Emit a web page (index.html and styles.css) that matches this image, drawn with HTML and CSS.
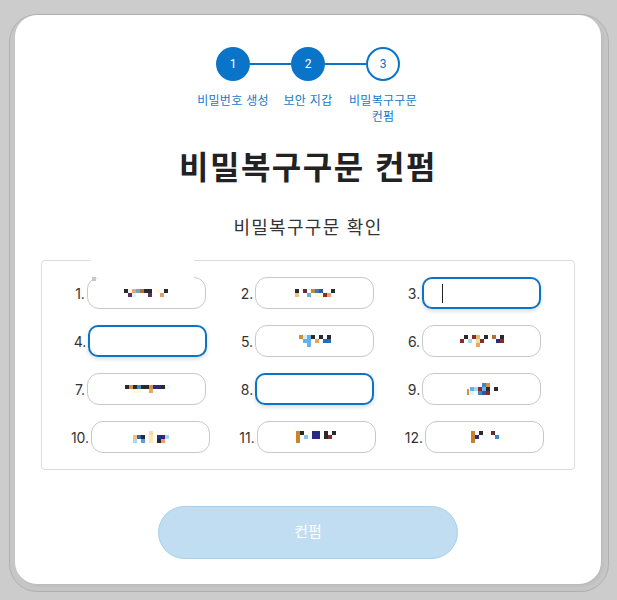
FILE: index.html
```html
<!DOCTYPE html>
<html lang="ko">
<head>
<meta charset="utf-8">
<title>비밀복구구문 컨펌</title>
<link rel="stylesheet" href="styles.css">
</head>
<body>
<div class="frame">
  <div class="card">
    <div class="stepper">
      <div class="dots">
        <span class="dot done">1</span><span class="bar"></span><span class="dot done">2</span><span class="bar"></span><span class="dot cur">3</span>
      </div>
      <div class="labels">
        <span class="label">비밀번호 생성</span>
        <span class="label">보안 지갑</span>
        <span class="label">비밀복구구문 컨펌</span>
      </div>
    </div>
    <h1 class="title">비밀복구구문 컨펌</h1>
    <p class="sub">비밀복구구문 확인</p>
    <div class="words">
      <div class="glitch"></div>
      <div class="cell"><span class="num">1.</span><div class="slot glitched"><svg width="44" height="8" viewBox="0 0 44 8" shape-rendering="crispEdges"><rect x="0" y="0" width="4" height="4" fill="#2a2a2a"/><rect x="4" y="0" width="4" height="4" fill="#fff8dc"/><rect x="8" y="0" width="4" height="4" fill="#e8a860"/><rect x="12" y="0" width="4" height="4" fill="#6aa8d8"/><rect x="16" y="0" width="4" height="4" fill="#b8702a"/><rect x="20" y="0" width="8" height="4" fill="#2a2a2a"/><rect x="32" y="0" width="4" height="4" fill="#fff8dc"/><rect x="40" y="0" width="4" height="4" fill="#2a2a2a"/><rect x="4" y="4" width="4" height="4" fill="#5c2a6a"/><rect x="8" y="4" width="4" height="4" fill="#d8f4fc"/><rect x="24" y="4" width="4" height="4" fill="#5c2a6a"/><rect x="36" y="4" width="4" height="4" fill="#e8a060"/></svg></div></div>
      <div class="cell"><span class="num">2.</span><div class="slot"><svg width="40" height="8" viewBox="0 0 40 8" shape-rendering="crispEdges"><rect x="0" y="0" width="4" height="4" fill="#2a2a2a"/><rect x="8" y="0" width="4" height="4" fill="#6a2a2a"/><rect x="16" y="0" width="4" height="4" fill="#c88a30"/><rect x="20" y="0" width="4" height="4" fill="#3a78c0"/><rect x="24" y="0" width="4" height="4" fill="#2a5aa0"/><rect x="36" y="0" width="4" height="4" fill="#2a2a2a"/><rect x="0" y="4" width="4" height="4" fill="#f0c080"/><rect x="12" y="4" width="4" height="4" fill="#6ab0e8"/><rect x="20" y="4" width="8" height="4" fill="#fff8d0"/><rect x="28" y="4" width="4" height="4" fill="#8a2a2a"/><rect x="32" y="4" width="4" height="4" fill="#e8a060"/></svg></div></div>
      <div class="cell"><span class="num">3.</span><div class="slot active"><span class="caret"></span></div></div>
      <div class="cell"><span class="num">4.</span><div class="slot active"></div></div>
      <div class="cell"><span class="num">5.</span><div class="slot"><svg width="32" height="12" viewBox="0 0 32 12" shape-rendering="crispEdges"><rect x="0" y="0" width="4" height="4" fill="#d09030"/><rect x="4" y="0" width="4" height="4" fill="#c8f0f8"/><rect x="8" y="0" width="4" height="4" fill="#6ab0e8"/><rect x="12" y="0" width="4" height="4" fill="#2a2a2a"/><rect x="20" y="0" width="4" height="4" fill="#2a2a2a"/><rect x="28" y="0" width="4" height="4" fill="#2a2a2a"/><rect x="4" y="4" width="8" height="4" fill="#6ab0e8"/><rect x="16" y="4" width="4" height="4" fill="#e8a060"/><rect x="24" y="4" width="8" height="4" fill="#2a6ab8"/><rect x="8" y="8" width="4" height="4" fill="#6ab0e8"/></svg></div></div>
      <div class="cell"><span class="num">6.</span><div class="slot"><svg width="44" height="12" viewBox="0 0 44 12" shape-rendering="crispEdges"><rect x="4" y="0" width="4" height="4" fill="#2a2a2a"/><rect x="12" y="0" width="4" height="4" fill="#8a2a2a"/><rect x="16" y="0" width="4" height="4" fill="#d8c070"/><rect x="24" y="0" width="4" height="4" fill="#2a2a2a"/><rect x="32" y="0" width="4" height="4" fill="#b07030"/><rect x="40" y="0" width="4" height="4" fill="#2a2a2a"/><rect x="0" y="4" width="4" height="4" fill="#8a2a2a"/><rect x="8" y="4" width="4" height="4" fill="#a8d8f0"/><rect x="16" y="4" width="4" height="4" fill="#f0dca0"/><rect x="20" y="4" width="4" height="4" fill="#8a2a2a"/><rect x="36" y="4" width="4" height="4" fill="#2a2a80"/><rect x="40" y="4" width="4" height="4" fill="#8a2a2a"/><rect x="16" y="8" width="4" height="4" fill="#e8a860"/></svg></div></div>
      <div class="cell"><span class="num">7.</span><div class="slot"><svg width="44" height="8" viewBox="0 0 44 8" shape-rendering="crispEdges"><rect x="0" y="0" width="4" height="4" fill="#2a2a2a"/><rect x="4" y="0" width="4" height="4" fill="#d89040"/><rect x="8" y="0" width="4" height="4" fill="#2a2a2a"/><rect x="12" y="0" width="4" height="4" fill="#3a88d0"/><rect x="16" y="0" width="8" height="4" fill="#2a2a2a"/><rect x="24" y="0" width="4" height="4" fill="#d89040"/><rect x="28" y="0" width="8" height="4" fill="#2a2a80"/><rect x="36" y="0" width="4" height="4" fill="#2a2a2a"/><rect x="40" y="0" width="4" height="4" fill="#e8f8fc"/><rect x="8" y="4" width="8" height="4" fill="#fff8d0"/><rect x="24" y="4" width="4" height="4" fill="#e8a860"/></svg></div></div>
      <div class="cell"><span class="num">8.</span><div class="slot active"></div></div>
      <div class="cell"><span class="num">9.</span><div class="slot"><svg width="32" height="12" viewBox="0 0 32 12" shape-rendering="crispEdges"><rect x="16" y="0" width="4" height="4" fill="#3a88d0"/><rect x="20" y="0" width="4" height="4" fill="#d89040"/><rect x="4" y="4" width="4" height="4" fill="#6ab0e8"/><rect x="8" y="4" width="4" height="4" fill="#a8d8f0"/><rect x="12" y="4" width="4" height="4" fill="#8a2a2a"/><rect x="16" y="4" width="4" height="4" fill="#6ab0e8"/><rect x="20" y="4" width="4" height="4" fill="#2a2a2a"/><rect x="28" y="4" width="4" height="4" fill="#2a2a2a"/><rect x="1" y="6" width="2" height="6" fill="#d89040"/><rect x="4" y="8" width="4" height="4" fill="#d8f4fc"/><rect x="12" y="8" width="4" height="4" fill="#3a88d0"/><rect x="16" y="8" width="4" height="4" fill="#2a5aa0"/><rect x="20" y="8" width="4" height="4" fill="#8a2a2a"/></svg></div></div>
      <div class="cell"><span class="num">10.</span><div class="slot"><svg width="36" height="12" viewBox="0 0 36 12" shape-rendering="crispEdges"><rect x="16" y="0" width="4" height="4" fill="#f8d8a0"/><rect x="0" y="4" width="4" height="4" fill="#f8c080"/><rect x="4" y="4" width="4" height="4" fill="#2a6ab0"/><rect x="8" y="4" width="4" height="4" fill="#2a2a2a"/><rect x="16" y="4" width="4" height="4" fill="#ffe8b0"/><rect x="24" y="4" width="8" height="4" fill="#2a2a80"/><rect x="32" y="4" width="4" height="4" fill="#a8d8f0"/><rect x="0" y="8" width="4" height="4" fill="#a8d8f0"/><rect x="8" y="8" width="4" height="4" fill="#5aa0e0"/><rect x="16" y="8" width="4" height="4" fill="#ffe8b0"/><rect x="24" y="8" width="4" height="4" fill="#2a2a2a"/><rect x="28" y="8" width="4" height="4" fill="#e8a060"/></svg></div></div>
      <div class="cell"><span class="num">11.</span><div class="slot"><svg width="40" height="12" viewBox="0 0 40 12" shape-rendering="crispEdges"><rect x="0" y="0" width="4" height="12" fill="#c8862a"/><rect x="4" y="0" width="4" height="4" fill="#2a2a2a"/><rect x="8" y="4" width="4" height="4" fill="#88c8f0"/><rect x="16" y="0" width="8" height="8" fill="#2a2a88"/><rect x="28" y="0" width="4" height="8" fill="#2a2a2a"/><rect x="36" y="0" width="4" height="4" fill="#2a2a2a"/><rect x="32" y="4" width="4" height="4" fill="#8a2a2a"/></svg></div></div>
      <div class="cell"><span class="num">12.</span><div class="slot"><svg width="28" height="12" viewBox="0 0 28 12" shape-rendering="crispEdges"><rect x="0" y="0" width="4" height="12" fill="#c8802a"/><rect x="8" y="0" width="4" height="4" fill="#2a2a2a"/><rect x="20" y="0" width="4" height="4" fill="#6a2a2a"/><rect x="4" y="4" width="4" height="4" fill="#2a2a88"/><rect x="12" y="4" width="4" height="4" fill="#f0fcff"/><rect x="24" y="4" width="4" height="4" fill="#3a88d0"/></svg></div></div>
    </div>
    <button class="confirm" type="button">컨펌</button>
  </div>
</div>
</body>
</html>
```

FILE: styles.css
```css
* { box-sizing: border-box; }

html, body {
  margin: 0;
  padding: 0;
  background: #cccccc;
}

body {
  font-family: "Noto Sans CJK KR", "Noto Sans", sans-serif;
  color: #222;
}

.frame {
  margin: 14px 8px 8px 9px;
  border: 1px solid #b0b0b0;
  border-radius: 28px;
  padding: 0 7px 7px 5px;
  background: #c6c6c6;
}

.card {
  background: #fff;
  border-radius: 22px;
  height: 569px;
  padding-top: 32px;
  display: flex;
  flex-direction: column;
  align-items: center;
  box-shadow: 2px 2px 3px rgba(0, 0, 0, 0.05);
}

.stepper {
  display: flex;
  flex-direction: column;
  align-items: center;
}

.dots {
  display: flex;
  align-items: center;
}

.dot {
  width: 34px;
  height: 34px;
  border-radius: 50%;
  display: flex;
  align-items: center;
  justify-content: center;
  font-family: "Roboto", "Noto Sans", sans-serif;
  font-size: 12px;
}

.dot.done {
  background: #0a74c8;
  color: #fff;
}

.dot.cur {
  background: #fff;
  border: 2px solid #0a74c8;
  color: #0a74c8;
}

.bar {
  width: 41px;
  height: 2px;
  background: #0a74c8;
}

.labels {
  display: flex;
  margin-top: 11px;
}

.label {
  width: 75px;
  text-align: center;
  font-size: 12px;
  line-height: 16px;
  letter-spacing: 0.3px;
  color: #1a78c8;
}

.title {
  margin: 21px 0 0;
  font-size: 32px;
  line-height: 40px;
  font-weight: 700;
  letter-spacing: 1.5px;
  color: #222;
}

.sub {
  margin: 28px 0 0;
  font-size: 18px;
  line-height: 26px;
  font-weight: 400;
  color: #333;
  letter-spacing: 1.3px;
}

.words {
  position: relative;
  margin-top: 21px;
  width: 534px;
  border: 1px solid #dcdcdc;
  border-radius: 4px;
  padding: 16px 16px 16px 15px;
  display: grid;
  grid-template-columns: repeat(3, 167px);
  row-gap: 16px;
}

.glitch {
  position: absolute;
  left: 49px;
  top: -5px;
  width: 103px;
  height: 22px;
  background: #fff;
  z-index: 1;
}

.cell {
  display: flex;
  align-items: center;
  justify-content: center;
  gap: 2px;
}

.num {
  font-family: "Inter", "Noto Sans", sans-serif;
  font-size: 14px;
  color: #333;
}

.slot {
  position: relative;
  width: 119px;
  height: 32px;
  border: 1px solid #c8c8c8;
  border-radius: 12px;
  display: flex;
  align-items: center;
  justify-content: center;
  background: #fff;
}

.slot.glitched::before {
  content: "";
  position: absolute;
  left: 4px;
  top: -1px;
  width: 4px;
  height: 4px;
  background: #c8c8c8;
  z-index: 2;
}

.slot.active {
  border: 2px solid #0a74c8;
  border-radius: 10px;
  box-shadow: 0 2px 4px rgba(0, 0, 0, 0.15);
  justify-content: flex-start;
}

.caret {
  margin-left: 18px;
  width: 1px;
  height: 19px;
  background: #222;
}

.confirm {
  margin-top: 36px;
  width: 300px;
  height: 53px;
  border: 1px solid #a9cfea;
  border-radius: 27px;
  background: #c1ddf1;
  color: #fff;
  font-family: "Noto Sans CJK KR", "Noto Sans", sans-serif;
  font-size: 15px;
  line-height: 20px;
  padding: 0 0 4px;
}
```
